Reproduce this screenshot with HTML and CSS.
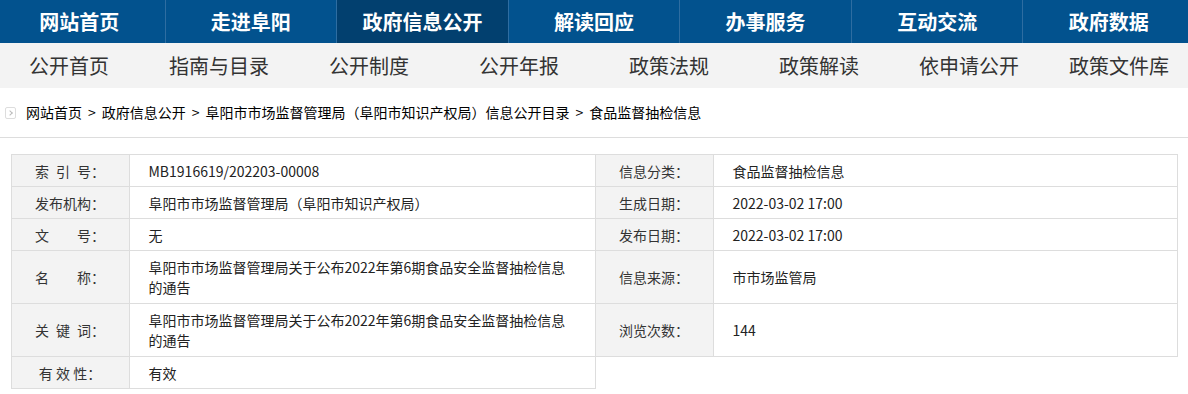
FILE: index.html
```html
<!DOCTYPE html>
<html lang="zh-CN">
<head>
  <meta charset="UTF-8">
  <title>食品监督抽检信息 – 阜阳市人民政府</title>
  <link rel="stylesheet" href="styles.css">
</head>
<body>
  <div class="nav">
    <ul>
      <li><a href="#">网站首页</a></li>
      <li><a href="#">走进阜阳</a></li>
      <li class="on"><a href="#">政府信息公开</a></li>
      <li><a href="#">解读回应</a></li>
      <li><a href="#">办事服务</a></li>
      <li><a href="#">互动交流</a></li>
      <li><a href="#">政府数据</a></li>
    </ul>
  </div>
  <div class="subnav">
    <ul>
      <li><a href="#">公开首页</a></li>
      <li><a href="#">指南与目录</a></li>
      <li><a href="#">公开制度</a></li>
      <li><a href="#">公开年报</a></li>
      <li><a href="#">政策法规</a></li>
      <li><a href="#">政策解读</a></li>
      <li><a href="#">依申请公开</a></li>
      <li><a href="#">政策文件库</a></li>
    </ul>
  </div>
  <div class="crumb">
    <span class="crumb-icon"></span>
    <a href="#">网站首页</a><span class="sep">&gt;</span><a href="#">政府信息公开</a><span class="sep">&gt;</span><a href="#">阜阳市市场监督管理局（阜阳市知识产权局）信息公开目录</a><span class="sep">&gt;</span><a href="#">食品监督抽检信息</a>
  </div>
  <table class="info">
    <colgroup>
      <col class="c-label"><col class="c-value"><col class="c-label"><col class="c-value2">
    </colgroup>
    <tr>
      <th>索&ensp;引&ensp;号</th><td>MB1916619/202203-00008</td>
      <th>信息分类</th><td>食品监督抽检信息</td>
    </tr>
    <tr>
      <th>发布机构</th><td>阜阳市市场监督管理局（阜阳市知识产权局）</td>
      <th>生成日期</th><td>2022-03-02 17:00</td>
    </tr>
    <tr>
      <th>文&#12288;&#12288;号</th><td>无</td>
      <th>发布日期</th><td>2022-03-02 17:00</td>
    </tr>
    <tr class="tall">
      <th>名&#12288;&#12288;称</th><td>阜阳市市场监督管理局关于公布2022年第6期食品安全监督抽检信息的通告</td>
      <th>信息来源</th><td>市市场监管局</td>
    </tr>
    <tr class="tall">
      <th>关&ensp;键&ensp;词</th><td>阜阳市市场监督管理局关于公布2022年第6期食品安全监督抽检信息的通告</td>
      <th>浏览次数</th><td>144</td>
    </tr>
    <tr>
      <th>有 效 性</th><td>有效</td>
      <td class="empty" colspan="2"></td>
    </tr>
  </table>
</body>
</html>
```

FILE: styles.css
```css
body {
  margin: 0;
  font-family: "Noto Sans CJK SC", "Microsoft YaHei", sans-serif;
  font-size: 14px;
  color: #333;
  background: #fff;
}
a {
  color: inherit;
  text-decoration: none;
}
ul {
  list-style: none;
  margin: 0;
  padding: 0;
}
.nav, .subnav {
  display: flex;
  justify-content: center;
}
.nav ul, .subnav ul {
  flex: 0 0 1200px;
  display: flex;
}
.nav li, .subnav li {
  flex: 1;
  text-align: center;
}
.nav {
  height: 43px;
  background: #02528e;
}
.nav li {
  line-height: 43px;
  font-size: 20px;
  font-weight: bold;
  color: #fff;
}
.nav li + li {
  border-left: 1px solid #2e6da1;
}
.nav li.on {
  background: #02406f;
}
.subnav {
  height: 45px;
  background: #f3f3f3;
}
.subnav li {
  line-height: 45px;
  font-size: 20px;
  color: #333;
}
.crumb {
  height: 49px;
  line-height: 49px;
  padding-left: 5px;
  border-bottom: 1px solid #ddd;
  color: #000;
  display: flex;
  align-items: center;
}
.crumb-icon {
  width: 9px;
  height: 10px;
  border: 1px solid #ddd;
  border-radius: 2px;
  margin-right: 10px;
  position: relative;
}
.crumb-icon::after {
  content: "";
  position: absolute;
  left: 2px;
  top: 3px;
  width: 3px;
  height: 3px;
  border-top: 1px solid #bbb;
  border-right: 1px solid #bbb;
  transform: rotate(45deg);
}
.crumb .sep {
  padding: 0 6px;
}
.info {
  width: 1166px;
  margin: 16px auto 0;
  border-collapse: collapse;
  table-layout: fixed;
}
.c-label { width: 118px; }
.c-value { width: 466px; }
.c-value2 { width: 464px; }
.info th, .info td {
  border: 1px solid #ddd;
  height: 31px;
  padding: 0;
  line-height: 20px;
  vertical-align: middle;
}
.info th {
  background: #f3f3f3;
  font-weight: normal;
  color: #333;
  text-align: center;
}
/* centred full-width colon, as in the original YaHei rendering */
.info th::after {
  content: "：";
  font-family: "Noto Sans CJK TC", sans-serif;
}
.info td {
  padding: 0 20px 0 19px;
  text-align: left;
  color: #222;
}
.info tr.tall th, .info tr.tall td {
  height: 52px;
}
.info td.empty {
  border: none;
}
```
